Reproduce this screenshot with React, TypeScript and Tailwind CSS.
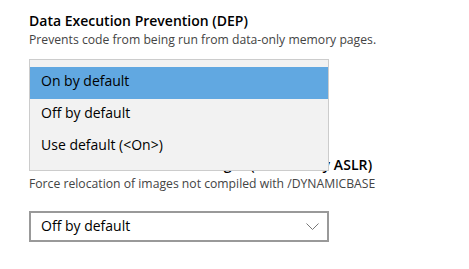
export default function App() {
  const options = ['On by default', 'Off by default', 'Use default (<On>)'];

  return (
    <div className="relative w-[469px] h-[269px] overflow-hidden bg-white pl-[29px] pt-[11px] text-black font-['Open_Sans','Noto_Sans',sans-serif]">
      {/* DEP */}
      <div className="text-[14px] leading-[20px] font-semibold">Data Execution Prevention (DEP)</div>
      <div className="mt-[1px] text-[12.2px] leading-[16px] text-[#444]">
        Prevents code from being run from data-only memory pages.
      </div>
      <div className="mt-[19px] h-[32px] w-[300px] border-2 border-[#999]" />

      {/* ASLR */}
      <div className="mt-[56px] text-[14px] leading-[20px] font-semibold tracking-[0.09px]">
        Force randomization for images (Mandatory ASLR)
      </div>
      <div className="mt-[1px] text-[12.2px] leading-[16px] text-[#444]">
        Force relocation of images not compiled with /DYNAMICBASE
      </div>
      <div className="mt-[19px] flex h-[31px] w-[300px] items-start justify-between border-2 border-[#999] pl-[10px] pr-[8px]">
        <span className="pt-[3px] text-[14px] leading-[20px]">Off by default</span>
        <svg width="13" height="7" viewBox="0 0 13 7" className="mt-[10px]">
          <polyline points="0.5,0.5 6.5,6.5 12.5,0.5" fill="none" stroke="#777" strokeWidth="1" />
        </svg>
      </div>

      {/* open dropdown list */}
      <div className="absolute left-[29px] top-[59px] w-[300px] h-[112px] border border-[#ccc] bg-[#f2f2f2] py-[7px]">
        {options.map((o, i) => (
          <div
            key={o}
            className={i === 0
              ? 'h-[32px] bg-[#61a8e1] pl-[11px] pt-[4px] text-[14px] leading-[20px]'
              : 'h-[32px] pl-[11px] pt-[4px] text-[14px] leading-[20px]'}
          >
            {o}
          </div>
        ))}
      </div>
    </div>
  );
}
